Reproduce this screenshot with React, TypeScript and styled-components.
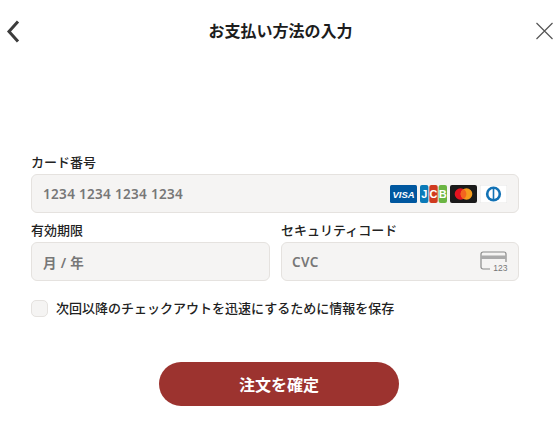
import React from "react";
import styled, { createGlobalStyle } from "styled-components";

const Global = createGlobalStyle`
  html, body { margin: 0; padding: 0; background: #fff; }
  body { font-family: "Noto Sans CJK JP", "Noto Sans", sans-serif; overflow: hidden; }
`;
const Page = styled.div`
  width: 556px; height: 433px; display: flex; flex-direction: column; overflow: hidden; background: #fff;
`;
const Header = styled.header`
  height: 62px; display: grid; grid-template-columns: 60px 1fr 60px; align-items: center;
`;
const IconButton = styled.div<{ $end?: boolean }>`
  display: flex; height: 62px; align-items: center;
  justify-content: ${(p) => (p.$end ? "flex-end" : "flex-start")};
  padding: ${(p) => (p.$end ? "0 3px 0 0" : "0 0 0 5px")};
  box-sizing: border-box;
`;
const Title = styled.h1`
  margin: -2px 0 0; padding-left: 5px; text-align: center; font-size: 16px; line-height: 22px; font-weight: 700; color: #1c1c1c;
`;
const Form = styled.form`
  padding: 91px 37px 0 31px; display: flex; flex-direction: column;
`;
const Row = styled.div`
  display: grid; grid-template-columns: 239px 238px; column-gap: 11px; margin-top: 8px;
`;
const Field = styled.div`display: flex; flex-direction: column;`;
const Label = styled.label`
  font-size: 13px; line-height: 18px; height: 21px; font-weight: 500; color: #222;
`;
const InputBox = styled.div`
  height: 39px; box-sizing: border-box; background: #f5f4f3; border: 1px solid #e5e2df; border-radius: 6px;
  display: flex; align-items: center; justify-content: space-between; padding: 0 10px 0 11px;
  font-size: 13.5px; font-weight: 500; color: #777;
`;
const Placeholder = styled.span<{ $tight?: boolean }>`
  font-family: "Noto Sans", "Noto Sans CJK JP", sans-serif; font-weight: 600; letter-spacing: 0.32px;
  margin-left: ${(p) => (p.$tight ? "-1px" : "0")};
`;
const Brands = styled.div`display: flex; align-items: center; gap: 3px; margin-right: 1px;`;
const CheckRow = styled.div`
  display: flex; align-items: center; gap: 8px; margin-top: 18px; height: 18px;
`;
const Box = styled.span`
  width: 17px; height: 17px; box-sizing: border-box; background: #f5f4f3; border: 1px solid #e5e2df; border-radius: 5px;
`;
const CheckText = styled.span`font-size: 13px; line-height: 18px; font-weight: 500; color: #222;`;
const Submit = styled.button`
  align-self: flex-start; margin: 45px 0 0 128px; width: 240px; height: 44px; border: 0; border-radius: 22px;
  background: #9c332f; color: #fff; font: 700 16px/20px "Noto Sans CJK JP", sans-serif;
`;

const Back = () => (
  <svg width="16" height="24" viewBox="0 0 16 24"><path d="M13 2.5 4 12.5l9 10" fill="none" stroke="#3c3c3c" strokeWidth="3" /></svg>
);
const Close = () => (
  <svg width="17" height="18" viewBox="0 0 17 18"><path d="M.5 1 16.5 17M16.5 1 .5 17" fill="none" stroke="#555" strokeWidth="1.2" /></svg>
);
const Visa = () => (
  <svg width="27" height="18" viewBox="0 0 27 18">
    <rect width="27" height="18" rx="1.5" fill="#00579f" />
    <text x="13.5" y="12.5" textAnchor="middle" fontFamily="Liberation Sans" fontStyle="italic" fontWeight="700" fontSize="9.5" fill="#fff">VISA</text>
  </svg>
);
const Jcb = () => (
  <svg width="27" height="18" viewBox="0 0 27 18" fontFamily="Liberation Sans" fontWeight="700" fontSize="11" fill="#fff" textAnchor="middle">
    <rect width="8.4" height="18" rx="2" fill="#0a7ab8" />
    <rect x="9.3" width="8.4" height="18" rx="2" fill="#cf3a1f" />
    <rect x="18.6" width="8.4" height="18" rx="2" fill="#6bb543" />
    <text x="4.2" y="13">J</text>
    <text x="13.5" y="13">C</text>
    <text x="22.8" y="13">B</text>
  </svg>
);
const Master = () => (
  <svg width="27" height="18" viewBox="0 0 27 18">
    <rect width="27" height="18" rx="2" fill="#1a1a1a" />
    <circle cx="10.5" cy="9" r="5.8" fill="#e3131f" />
    <circle cx="16.5" cy="9" r="5.8" fill="#f59b1c" />
    <path d="M13.5 4a5.8 5.8 0 0 1 0 10 5.8 5.8 0 0 1 0-10z" fill="#f2641f" />
  </svg>
);
const Diners = () => (
  <svg width="27" height="18" viewBox="0 0 27 18">
    <rect x=".25" y=".25" width="26.5" height="17.5" fill="#fff" stroke="#e8e8e8" strokeWidth=".5" />
    <circle cx="13.5" cy="9" r="7.6" fill="#1272b5" />
    <circle cx="13.5" cy="9" r="5" fill="#fff" />
    <rect x="12.7" y="3.5" width="1.6" height="11" fill="#1272b5" />
  </svg>
);
const Cvc = () => (
  <svg width="28" height="21" viewBox="0 0 28 21">
    <path d="M10 18H3a2 2 0 0 1-2-2V3a2 2 0 0 1 2-2h21a2 2 0 0 1 2 2v8" fill="none" stroke="#8a8a8a" strokeWidth="1.2" />
    <rect x="1" y="4.5" width="25" height="3.5" fill="#aaa" />
    <text x="27.5" y="20" textAnchor="end" fontFamily="Liberation Sans" fontSize="8.5" fill="#777">123</text>
  </svg>
);

export default function App() {
  return (
    <Page>
      <Global />
      <Header>
        <IconButton><Back /></IconButton>
        <Title>お支払い方法の入力</Title>
        <IconButton $end><Close /></IconButton>
      </Header>
      <Form>
        <Field>
          <Label>カード番号</Label>
          <InputBox>
            <Placeholder>1234 1234 1234 1234</Placeholder>
            <Brands><Visa /><Jcb /><Master /><Diners /></Brands>
          </InputBox>
        </Field>
        <Row>
          <Field>
            <Label>有効期限</Label>
            <InputBox><Placeholder>月 / 年</Placeholder></InputBox>
          </Field>
          <Field>
            <Label>セキュリティコード</Label>
            <InputBox><Placeholder $tight>CVC</Placeholder><Cvc /></InputBox>
          </Field>
        </Row>
        <CheckRow>
          <Box />
          <CheckText>次回以降のチェックアウトを迅速にするために情報を保存</CheckText>
        </CheckRow>
        <Submit type="button">注文を確定</Submit>
      </Form>
    </Page>
  );
}
